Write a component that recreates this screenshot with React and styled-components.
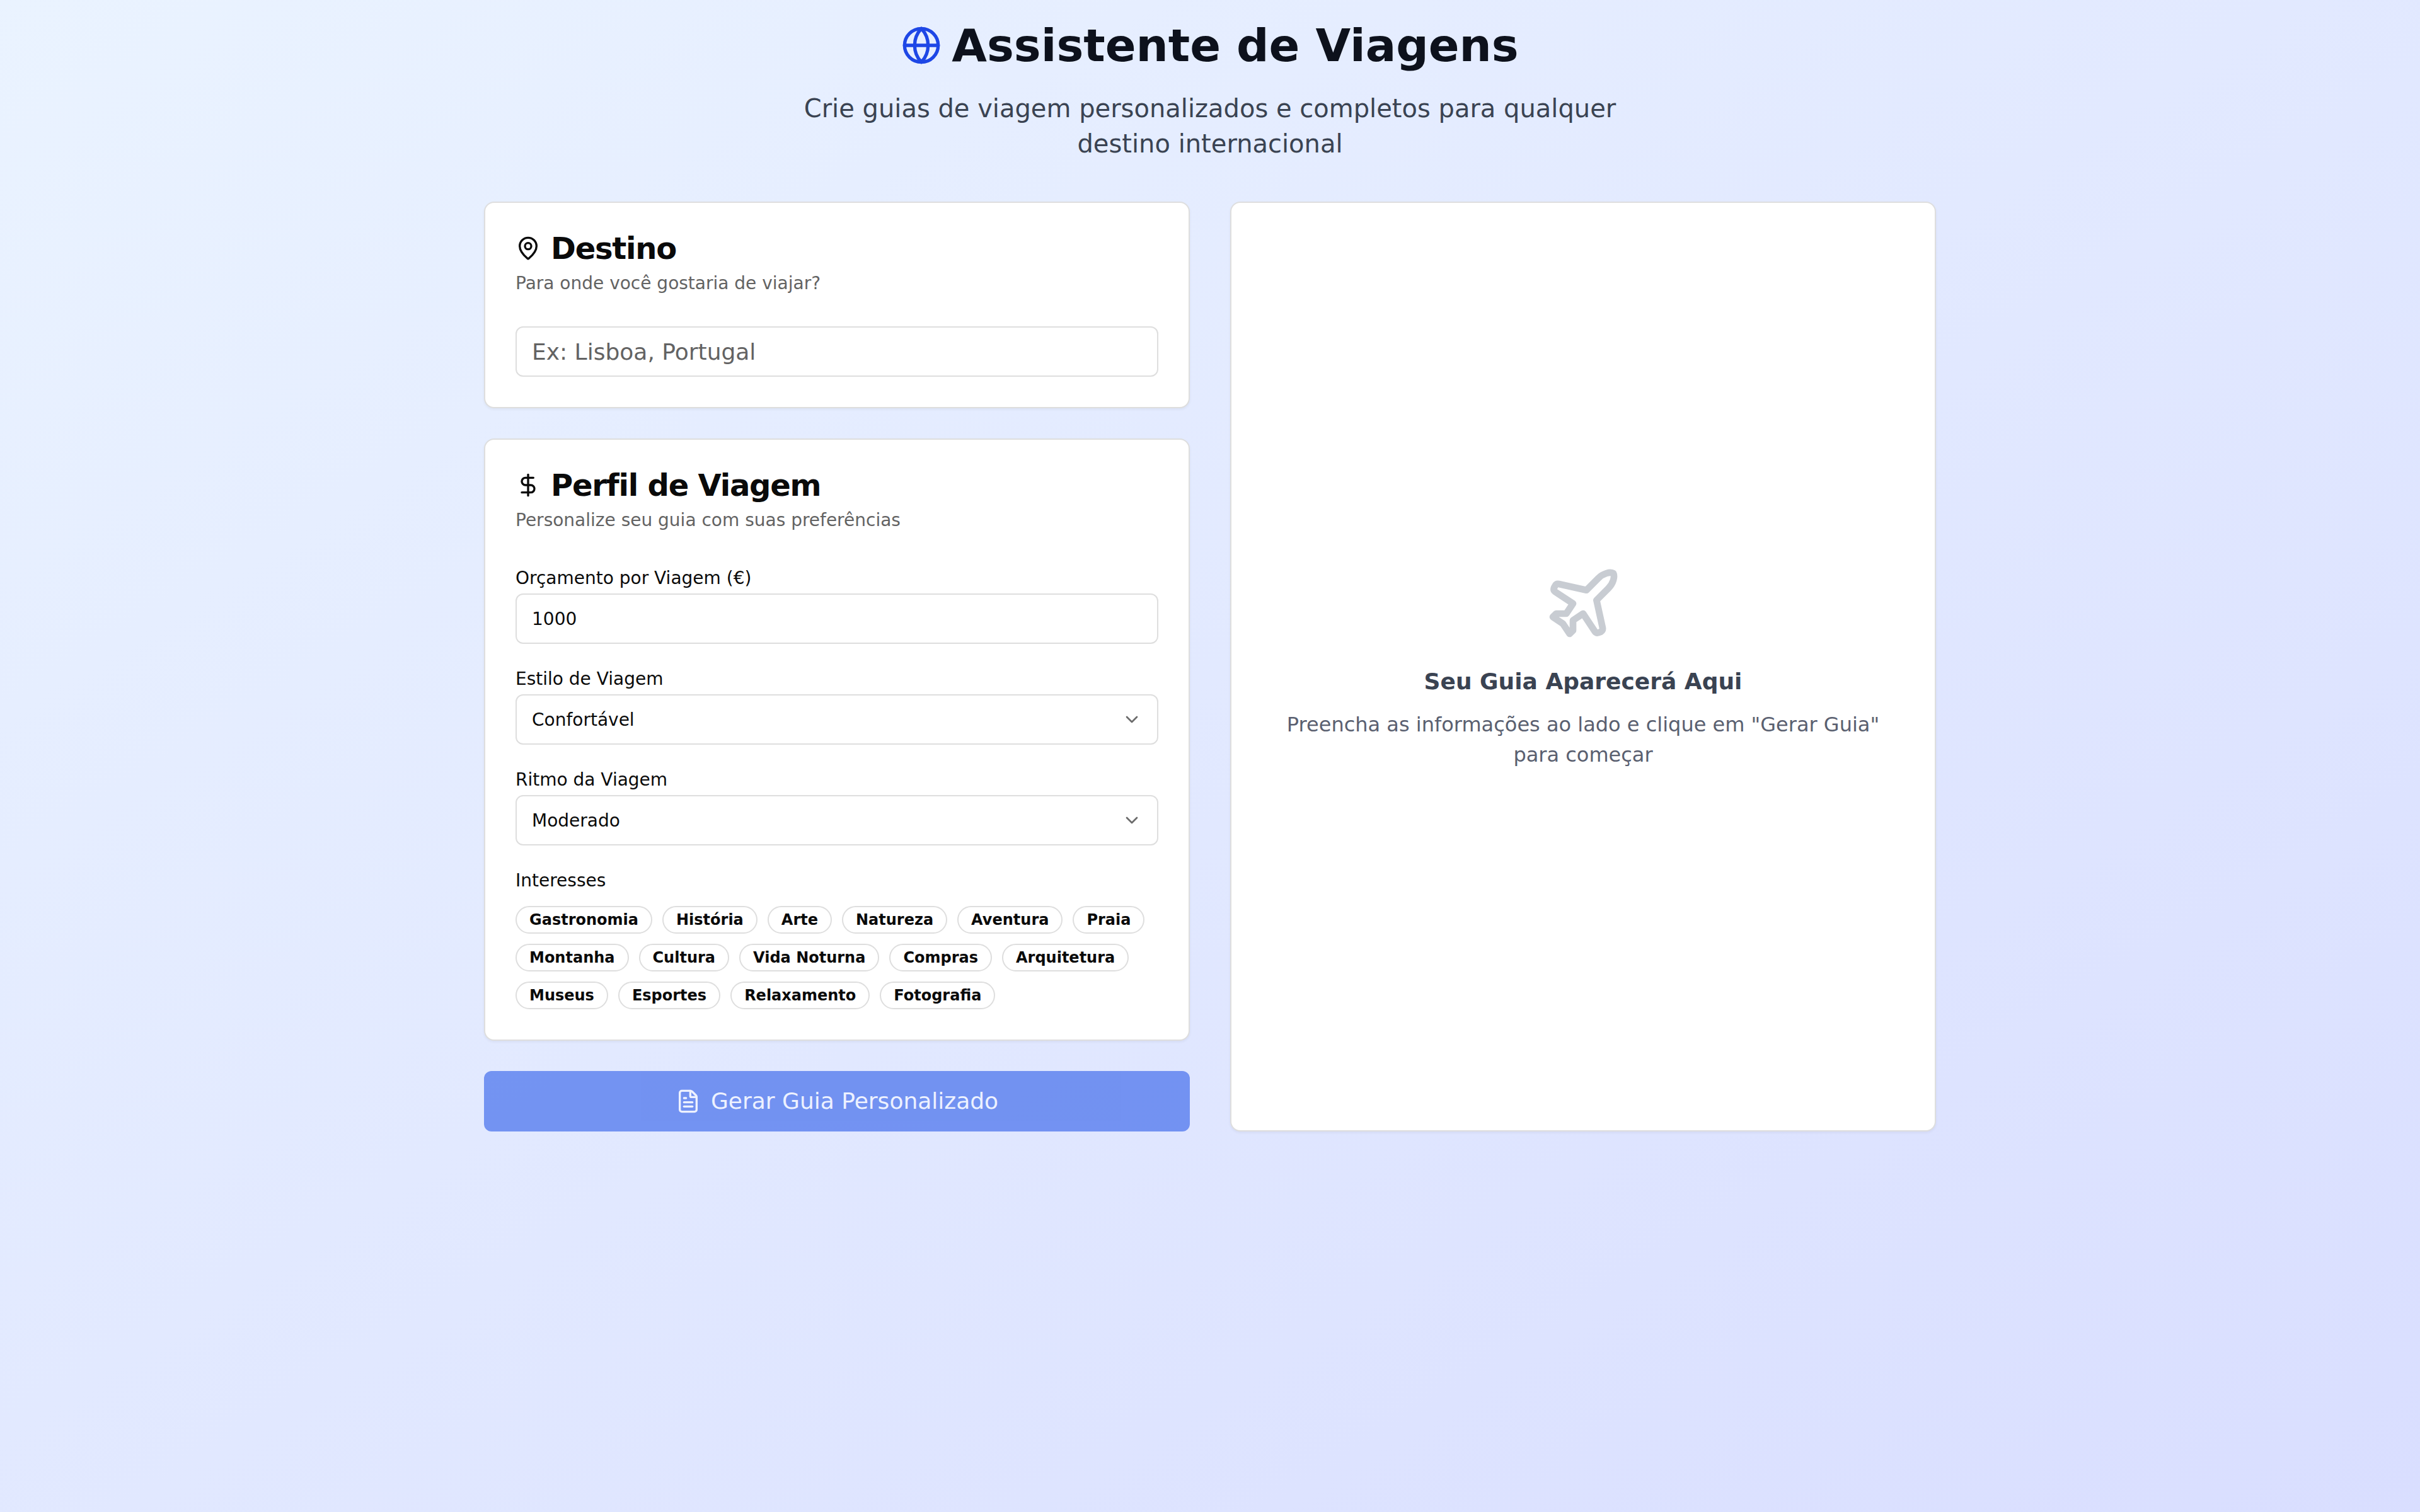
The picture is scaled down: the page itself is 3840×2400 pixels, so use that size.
import styled, { createGlobalStyle } from 'styled-components';
import React, { useState } from 'react';
import { ChevronDown, DollarSign, FileText, Globe, MapPin, Plane } from 'lucide-react';

const GlobalStyle = createGlobalStyle`
  *, *::before, *::after {
    box-sizing: border-box;
  }

  body {
    margin: 0;
    color: #0a0a0a;
    font-family: 'DejaVu Sans', sans-serif;
    font-size: 32px;
    line-height: 48px;
  }

  h1, h2, h3, p {
    margin: 0;
  }

  button, input, select {
    font-family: inherit;
    color: inherit;
  }
`;

const Page = styled.div`
  min-height: 100vh;
  padding: 32px;
  background-image: linear-gradient(to bottom right, #eaf3ff, #d9deff);
`;

const Container = styled.main`
  max-width: 2304px;
  margin: 0 auto;
`;

const Header = styled.header`
  margin-bottom: 64px;
  text-align: center;
`;

const Title = styled.h1`
  display: flex;
  align-items: center;
  justify-content: center;
  gap: 16px;
  margin-bottom: 32px;
  color: #0d111c;
  font-size: 72px;
  font-weight: 700;
  line-height: 80px;

  svg {
    width: 64px;
    height: 64px;
    color: #1e47e6;
  }
`;

const Subtitle = styled.p`
  max-width: 1344px;
  margin: 0 auto;
  color: #3a4352;
  font-size: 40px;
  line-height: 56px;
`;

const Columns = styled.div`
  display: grid;
  grid-template-columns: 1fr 1fr;
  gap: 64px;

  @media (max-width: 1536px) {
    grid-template-columns: 1fr;
  }
`;

const Form = styled.form`
  display: flex;
  flex-direction: column;
  gap: 48px;
`;

const Card = styled.section`
  padding: 48px;
  background: #fff;
  border: 2px solid #dedede;
  border-radius: 16px;
  box-shadow: 0 2px 4px rgba(0, 0, 0, 0.05);
`;

const CardHeader = styled.div`
  display: flex;
  flex-direction: column;
  gap: 12px;
  margin-bottom: 48px;
`;

const CardTitle = styled.h2`
  display: flex;
  align-items: center;
  gap: 16px;
  font-size: 48px;
  font-weight: 600;
  line-height: 48px;
  letter-spacing: -0.025em;

  svg {
    width: 40px;
    height: 40px;
  }
`;

const CardDescription = styled.p`
  color: #636363;
  font-size: 28px;
  line-height: 40px;
`;

const Fields = styled.div`
  display: flex;
  flex-direction: column;
  gap: 32px;
`;

const Label = styled.label`
  display: block;
  font-size: 28px;
  line-height: 48px;
`;

const Input = styled.input`
  display: block;
  width: 100%;
  height: 80px;
  padding: 0 24px;
  background: #fff;
  border: 2px solid #dedede;
  border-radius: 12px;
  font-size: ${({ $large }) => ($large ? '36px' : '28px')};

  &::placeholder {
    color: #636363;
    opacity: 1;
  }
`;

const SelectBox = styled.div`
  position: relative;

  svg {
    position: absolute;
    top: 24px;
    right: 26px;
    width: 32px;
    height: 32px;
    opacity: 0.6;
    pointer-events: none;
  }
`;

const Select = styled.select`
  display: block;
  width: 100%;
  height: 80px;
  padding: 0 80px 0 24px;
  background: #fff;
  border: 2px solid #dedede;
  border-radius: 12px;
  font-size: 28px;
  appearance: none;
`;

const GroupLabel = styled.div`
  margin-bottom: 16px;
  font-size: 28px;
  line-height: 48px;
`;

const Badges = styled.div`
  display: flex;
  flex-wrap: wrap;
  gap: 16px;
`;

const Badge = styled.button`
  padding: 4px 20px;
  background: ${({ $selected }) => ($selected ? '#2558e9' : '#fff')};
  color: ${({ $selected }) => ($selected ? '#fff' : '#0a0a0a')};
  border: 2px solid ${({ $selected }) => ($selected ? '#2558e9' : '#dedede')};
  border-radius: 22px;
  font-size: 24px;
  font-weight: 600;
  line-height: 32px;
  cursor: pointer;
`;

const SubmitButton = styled.button`
  display: flex;
  align-items: center;
  justify-content: center;
  gap: 16px;
  height: 96px;
  background: #2a5ae9;
  color: #f5f8ff;
  border: none;
  border-radius: 12px;
  font-size: 36px;
  line-height: 56px;
  cursor: pointer;

  &:disabled {
    opacity: 0.6;
    cursor: default;
  }

  svg {
    width: 40px;
    height: 40px;
  }
`;

const EmptyCard = styled(Card)`
  display: flex;
  flex-direction: column;
  align-items: center;
  justify-content: center;
  text-align: center;

  svg {
    width: 128px;
    height: 128px;
    margin-bottom: 32px;
    color: #c8ccd2;
  }
`;

const EmptyTitle = styled.h3`
  margin-bottom: 16px;
  color: #3a4352;
  font-size: 36px;
  font-weight: 600;
  line-height: 56px;
`;

const EmptyText = styled.p`
  color: #5a6070;
`;

const styles = ['Econômico', 'Confortável', 'Luxo'];
const paces = ['Relaxado', 'Moderado', 'Intenso'];
const interests = [
  'Gastronomia', 'História', 'Arte', 'Natureza', 'Aventura', 'Praia',
  'Montanha', 'Cultura', 'Vida Noturna', 'Compras', 'Arquitetura',
  'Museus', 'Esportes', 'Relaxamento', 'Fotografia',
];

const SelectField = ({ id, label, value, options, onChange }) => (
  <div>
    <Label htmlFor={id}>{label}</Label>
    <SelectBox>
      <Select id={id} value={value} onChange={(e) => onChange(e.target.value)}>
        {options.map((option) => (
          <option key={option}>{option}</option>
        ))}
      </Select>
      <ChevronDown />
    </SelectBox>
  </div>
);

const App = () => {
  const [destination, setDestination] = useState('');
  const [budget, setBudget] = useState('1000');
  const [style, setStyle] = useState('Confortável');
  const [pace, setPace] = useState('Moderado');
  const [selected, setSelected] = useState([]);

  const toggleInterest = (name) => {
    setSelected((current) =>
      current.includes(name) ? current.filter((item) => item !== name) : [...current, name]
    );
  };

  return (
    <>
      <GlobalStyle />
      <Page>
        <Container>
          <Header>
            <Title>
              <Globe />
              Assistente de Viagens
            </Title>
            <Subtitle>
              Crie guias de viagem personalizados e completos para qualquer destino internacional
            </Subtitle>
          </Header>

          <Columns>
            <Form onSubmit={(e) => e.preventDefault()}>
              <Card>
                <CardHeader>
                  <CardTitle>
                    <MapPin />
                    Destino
                  </CardTitle>
                  <CardDescription id="destination-hint">Para onde você gostaria de viajar?</CardDescription>
                </CardHeader>
                <Input
                  $large
                  type="text"
                  aria-labelledby="destination-hint"
                  placeholder="Ex: Lisboa, Portugal"
                  value={destination}
                  onChange={(e) => setDestination(e.target.value)}
                />
              </Card>

              <Card>
                <CardHeader>
                  <CardTitle>
                    <DollarSign />
                    Perfil de Viagem
                  </CardTitle>
                  <CardDescription>Personalize seu guia com suas preferências</CardDescription>
                </CardHeader>
                <Fields>
                  <div>
                    <Label htmlFor="budget">Orçamento por Viagem (€)</Label>
                    <Input
                      id="budget"
                      type="number"
                      value={budget}
                      onChange={(e) => setBudget(e.target.value)}
                    />
                  </div>
                  <SelectField id="style" label="Estilo de Viagem" value={style} options={styles} onChange={setStyle} />
                  <SelectField id="pace" label="Ritmo da Viagem" value={pace} options={paces} onChange={setPace} />
                  <div role="group" aria-labelledby="interests">
                    <GroupLabel id="interests">Interesses</GroupLabel>
                    <Badges>
                      {interests.map((name) => (
                        <Badge
                          key={name}
                          type="button"
                          $selected={selected.includes(name)}
                          aria-pressed={selected.includes(name)}
                          onClick={() => toggleInterest(name)}
                        >
                          {name}
                        </Badge>
                      ))}
                    </Badges>
                  </div>
                </Fields>
              </Card>

              <SubmitButton type="submit" disabled={!destination}>
                <FileText />
                Gerar Guia Personalizado
              </SubmitButton>
            </Form>

            <EmptyCard>
              <Plane />
              <EmptyTitle>Seu Guia Aparecerá Aqui</EmptyTitle>
              <EmptyText>
                Preencha as informações ao lado e clique em "Gerar Guia" para começar
              </EmptyText>
            </EmptyCard>
          </Columns>
        </Container>
      </Page>
    </>
  );
};

export default App;
